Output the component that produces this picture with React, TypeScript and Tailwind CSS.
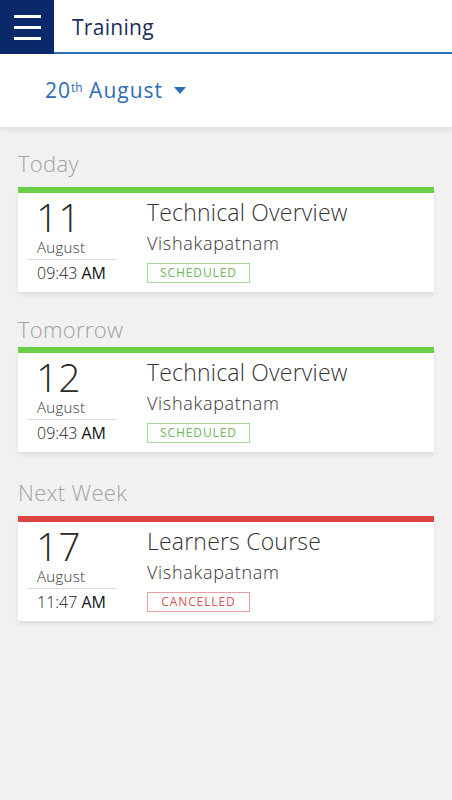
import React from "react";

type Session = {
  group: string;
  top: string;
  below: string;
  day: string;
  month: string;
  time: string;
  title: string;
  place: string;
  status: "SCHEDULED" | "CANCELLED";
};

const sessions: Session[] = [
  { group: "Today", top: "pt-[22px]", below: "mb-[10px]", day: "11", month: "August", time: "09:43", title: "Technical Overview", place: "Vishakapatnam", status: "SCHEDULED" },
  { group: "Tomorrow", top: "pt-[23px]", below: "mb-[4px]", day: "12", month: "August", time: "09:43", title: "Technical Overview", place: "Vishakapatnam", status: "SCHEDULED" },
  { group: "Next Week", top: "pt-[26px]", below: "mb-[10px]", day: "17", month: "August", time: "11:47", title: "Learners Course", place: "Vishakapatnam", status: "CANCELLED" },
];

function SessionCard({ s }: { s: Session }) {
  const cancelled = s.status === "CANCELLED";
  return (
    <div className="bg-white shadow-[0_3px_4px_rgba(0,0,0,0.08)]">
      <div className={cancelled ? "h-[6px] bg-[#de4444]" : "h-[6px] bg-[#6bcf45]"} />
      <div className="flex h-[99px]">
        <div className="w-[129px] pl-[10px] pt-[4px]">
          <div className="w-[89px]">
            <div className="pl-[8px] text-[39px] font-light leading-[39px] text-[#2a2a2a]">{s.day}</div>
            <div className="pl-[9px] pt-[2px] text-[15px] font-light leading-[18px] tracking-[0.3px] text-[#333]">{s.month}</div>
            <div className="mt-[3px] border-t border-[#dcdcdc] pt-[4px] pl-[9px] text-[16px] font-light leading-[18px] text-[#222]">
              {s.time} <span className="font-normal text-[#111]">AM</span>
            </div>
          </div>
        </div>
        <div className="flex-1 pt-[6px]">
          <div className="text-[23px] font-light leading-[26px] tracking-[0.2px] text-[#333]">{s.title}</div>
          <div className="mt-[7px] text-[18px] font-light leading-[22px] tracking-[0.7px] text-[#333]">{s.place}</div>
          <div
            className={
              cancelled
                ? "mt-[9px] flex h-[20px] w-[103px] items-center justify-center border border-[#e8a0a0] text-[12px] tracking-[0.9px] text-[#d75555]"
                : "mt-[9px] flex h-[20px] w-[103px] items-center justify-center border border-[#a8d79a] text-[12px] tracking-[0.9px] text-[#6fb55d]"
            }
          >
            {s.status}
          </div>
        </div>
      </div>
    </div>
  );
}

export default function App() {
  return (
    <div className="min-h-[800px] bg-[#f1f1f1] font-['Open_Sans','Lato',sans-serif]">
      <div className="flex h-[54px] bg-white">
        <div className="flex h-[54px] w-[54px] flex-col items-center justify-center gap-[8px] bg-[#0a296b]">
          <span className="h-[3px] w-[27px] bg-white" />
          <span className="h-[3px] w-[27px] bg-white" />
          <span className="h-[3px] w-[27px] bg-white" />
        </div>
        <div className="flex flex-1 items-center border-b-2 border-[#2b6cb6] pl-[18px] pt-[3px] text-[21px] tracking-[0.3px] text-[#1c2d5a]">
          Training
        </div>
      </div>
      <div className="flex h-[73px] items-center bg-white pl-[45px] shadow-[0_3px_5px_rgba(0,0,0,0.08)]">
        <span className="text-[21px] tracking-[1px] text-[#2d6cb8]">
          20<sup className="text-[12px] tracking-normal">th</sup> August
        </span>
        <svg className="ml-[11px]" width="12" height="7" viewBox="0 0 12 7">
          <path d="M0 0 L12 0 L6 7 Z" fill="#2d6cb8" />
        </svg>
      </div>
      <div className="px-[18px]">
        {sessions.map((s) => (
          <div key={s.group} className={s.top}>
            <div className={`${s.below} text-[22px] font-light leading-[28px] tracking-[0.3px] text-[#a3a3a3]`}>{s.group}</div>
            <SessionCard s={s} />
          </div>
        ))}
      </div>
    </div>
  );
}
